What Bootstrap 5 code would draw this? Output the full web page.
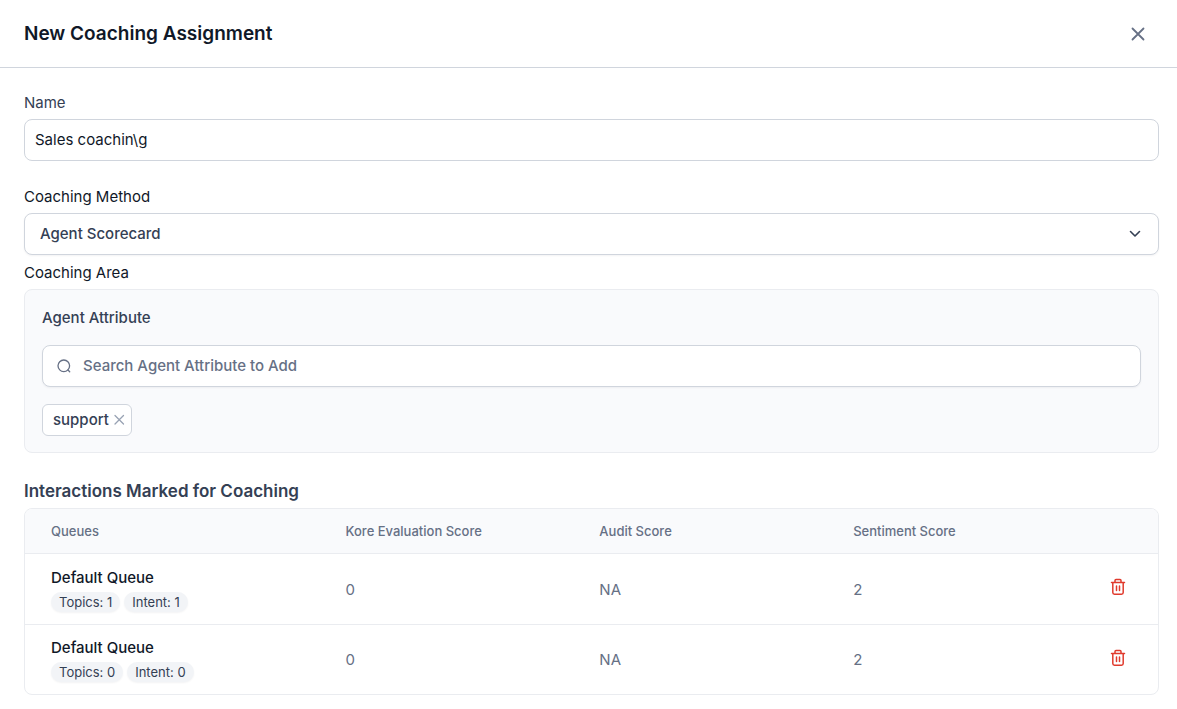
<!DOCTYPE html>
<html lang="en">
<head>
<meta charset="utf-8">
<meta name="viewport" content="width=device-width, initial-scale=1">
<title>New Coaching Assignment</title>
<link href="https://cdn.jsdelivr.net/npm/bootstrap@5.3.0/dist/css/bootstrap.min.css" rel="stylesheet">
<style>
  body { font-family: Inter, sans-serif; font-size: 15px; line-height: 20px; color: #101828; background: #fff; }
  .page-pad { padding-left: 24px; padding-right: 18px; }
  .page-head { height: 68px; border-bottom: 1px solid #d0d5dd; }
  .page-head h1 { font-size: 19px; line-height: 24px; font-weight: 600; }
  .section-title { font-size: 17px; line-height: 24px; font-weight: 600; color: #344054; margin: 26px 0 5px; }
  .icon-btn { padding: 0; border: 0; background: none; line-height: 0; }
  .icon-btn svg, .search-box svg { display: block; }
  .form-top { padding-top: 25px; }
  .field-group { margin-bottom: 26px; }
  .field-label { display: block; margin-bottom: 6px; }
  .slate { color: #344054; }
  .form-control, .form-select { height: 42px; font-size: 15px; line-height: 20px; border-color: #d0d5dd; border-radius: 8px; color: #101828; }
  .form-control { padding: 9px 10px 11px; }
  .form-select { padding: 10px 40px 10px 15px; font-weight: 500; color: #344054; box-shadow: 0 1px 2px rgba(16, 24, 40, .05);
    background-image: url("data:image/svg+xml,%3Csvg xmlns='http://www.w3.org/2000/svg' viewBox='0 0 12 12'%3E%3Cpath d='M1.500 3.500 6 8 10.500 3.500' fill='none' stroke='%23344054' stroke-width='1.600' stroke-linecap='round' stroke-linejoin='round'/%3E%3C/svg%3E");
    background-size: 12px 12px; background-position: right 17px center; }
  .area-panel { background: #f9fafc; border: 1px solid #eaecf0; border-radius: 8px; padding: 18px 17px 16px; }
  .area-stack { gap: 17px; }
  .search-box { height: 42px; border: 1px solid #d0d5dd; border-radius: 8px; padding: 0 13px; gap: 11px; box-shadow: 0 1px 2px rgba(16, 24, 40, .05); }
  .search-box input { border: 0; outline: 0; background: none; font-weight: 500; line-height: 20px; padding: 0; }
  .search-box input::placeholder { color: #667085; opacity: 1; }
  .chip { height: 32px; padding: 0 6px 0 10px; border: 1px solid #d0d5dd; border-radius: 6px; font-weight: 500; color: #344054; }
  .table-frame { border: 1px solid #eaecf0; border-radius: 8px; }
  .score-table { table-layout: fixed; color: #667085; }
  .score-table th, .score-table td { padding: 0 0 0 26px; border-color: #eaecf0; background: none; color: inherit; vertical-align: middle; }
  .score-table thead th { height: 44px; font-size: 13px; font-weight: 500; background: #f9fafc; }
  .score-table tbody td { height: 71px; padding-top: 2px; }
  .score-table tbody tr:last-child td { height: 70px; border-bottom: 0; }
  .col-queue { width: 26%; }
  .col-score { width: 22.4%; }
  .queue-name { font-weight: 500; color: #101828; }
  .pill { font-size: 13px; line-height: 20px; color: #344054; background: #f2f4f7; border-radius: 10px; padding: 0 8px; box-shadow: 0 1px 2px rgba(16, 24, 40, .05); }
</style>
</head>
<body>
<header class="page-head page-pad d-flex align-items-center justify-content-between">
  <h1 class="m-0">New Coaching Assignment</h1>
  <button type="button" class="icon-btn me-2" aria-label="Close">
    <svg width="26" height="26" viewBox="0 0 26 26" fill="none" stroke="#667085" stroke-width="1.800" stroke-linecap="round"><path d="M7.500 7.500 18.500 18.500M18.500 7.500 7.500 18.500"/></svg>
  </button>
</header>

<main class="page-pad pb-3">
  <form class="form-top">
    <div class="field-group">
      <label class="field-label slate" for="name">Name</label>
      <input class="form-control" id="name" type="text" value="Sales coachin\g">
    </div>
    <div>
      <label class="field-label" for="method">Coaching Method</label>
      <select class="form-select" id="method"><option>Agent Scorecard</option></select>
    </div>
    <div class="mt-2">
      <label class="field-label" for="attribute">Coaching Area</label>
      <div class="area-panel area-stack d-flex flex-column">
        <div class="slate fw-medium">Agent Attribute</div>
        <div class="search-box bg-white d-flex align-items-center">
          <svg width="16" height="16" viewBox="0 0 16 16" fill="none" stroke="#667085" stroke-width="1.300" stroke-linecap="round"><circle cx="7.800" cy="7.800" r="5.800"/><path d="M12 12 13.700 13.700"/></svg>
          <input class="flex-grow-1" id="attribute" type="text" placeholder="Search Agent Attribute to Add">
        </div>
        <div class="d-flex">
          <span class="chip bg-white d-inline-flex align-items-center gap-1">support
            <button type="button" class="icon-btn" aria-label="Remove support">
              <svg width="12" height="12" viewBox="0 0 12 12" fill="none" stroke="#98a2b3" stroke-width="1.300" stroke-linecap="round"><path d="M2 1.500 10.500 10M10.500 1.500 2 10"/></svg>
            </button>
          </span>
        </div>
      </div>
    </div>
  </form>

  <h2 class="section-title">Interactions Marked for Coaching</h2>
  <div class="table-frame overflow-hidden">
    <table class="table score-table mb-0">
      <thead>
        <tr>
          <th class="col-queue" scope="col">Queues</th>
          <th class="col-score" scope="col">Kore Evaluation Score</th>
          <th class="col-score" scope="col">Audit Score</th>
          <th class="col-score" scope="col">Sentiment Score</th>
          <th scope="col" aria-label="Actions"></th>
        </tr>
      </thead>
      <tbody>
        <tr>
          <td>
            <div class="queue-name mb-1">Default Queue</div>
            <div class="d-flex gap-1"><span class="pill">Topics: 1</span><span class="pill">Intent: 1</span></div>
          </td>
          <td>0</td><td>NA</td><td>2</td>
          <td>
            <button type="button" class="icon-btn" aria-label="Delete">
              <svg width="20" height="20" viewBox="-2 -1 20 20" fill="none" stroke="#e03a2d" stroke-width="1.500" stroke-linecap="round" stroke-linejoin="round"><path d="M2.500 4.500H15.500M6 4V2.500Q6 1.500 7 1.500H11Q12 1.500 12 2.500V4M3.800 4.700V14.500Q3.800 16.200 5.500 16.200H12.500Q14.200 16.200 14.200 14.500V4.700M7.500 8V12.500M10.500 8V12.500"/></svg>
            </button>
          </td>
        </tr>
        <tr>
          <td>
            <div class="queue-name mb-1">Default Queue</div>
            <div class="d-flex gap-1"><span class="pill">Topics: 0</span><span class="pill">Intent: 0</span></div>
          </td>
          <td>0</td><td>NA</td><td>2</td>
          <td>
            <button type="button" class="icon-btn" aria-label="Delete">
              <svg width="20" height="20" viewBox="-2 -1 20 20" fill="none" stroke="#e03a2d" stroke-width="1.500" stroke-linecap="round" stroke-linejoin="round"><path d="M2.500 4.500H15.500M6 4V2.500Q6 1.500 7 1.500H11Q12 1.500 12 2.500V4M3.800 4.700V14.500Q3.800 16.200 5.500 16.200H12.500Q14.200 16.200 14.200 14.500V4.700M7.500 8V12.500M10.500 8V12.500"/></svg>
            </button>
          </td>
        </tr>
      </tbody>
    </table>
  </div>
</main>
<script src="https://cdn.jsdelivr.net/npm/bootstrap@5.3.0/dist/js/bootstrap.bundle.min.js"></script>
</body>
</html>
